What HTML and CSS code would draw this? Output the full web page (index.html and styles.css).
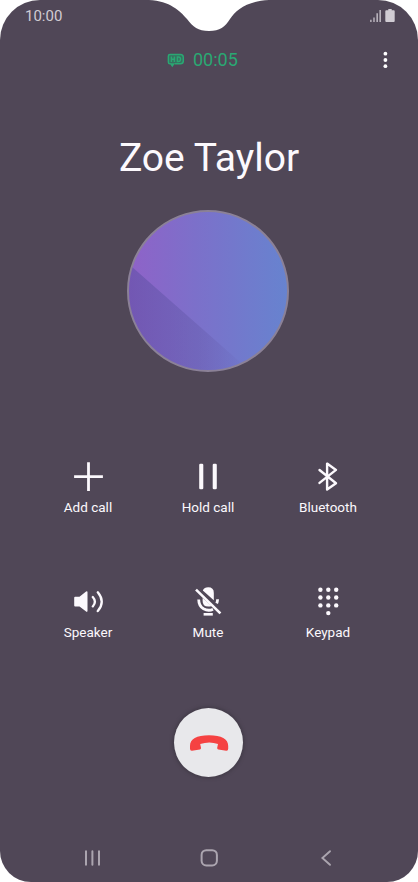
FILE: index.html
```html
<!DOCTYPE html>
<html lang="en">
<head>
<meta charset="UTF-8">
<meta name="viewport" content="width=device-width, initial-scale=1.0">
<title>Call</title>
<link rel="stylesheet" href="styles.css">
</head>
<body>

<div class="phone">
    <!-- Camera notch -->
    <svg class="notch" width="120" height="32" viewBox="0 0 120 32">
        <path d="M0 0C21 1 31 11 38 19C44 27 49 31 60 31C71 31 76 27 81 19C87 10 98 1 120 0Z" fill="#fff"/>
    </svg>

    <div class="status-bar">
        <span class="clock">10:00</span>
        <svg width="26" height="14" viewBox="0 0 26 14" fill="#d0ccd3">
            <path d="M.3 10.8h1.2v2.2H.3zM3.4 8.6h1.2V13H3.4zM6.5 4.2h1.3V13H6.5zM9.5 1.1h1.3V13H9.5z"/>
            <path d="M18.3 0h3.4v1.2h2q1 0 1 1v9.8q0 1-1 1h-7.4q-1 0-1-1V2.2q0-1 1-1h2z"/>
        </svg>
    </div>

    <div class="call-bar">
        <svg class="hd" width="18" height="16" viewBox="0 0 18 16" fill="none" stroke="#2aa873">
            <path d="M3.5 11.8H3Q1.4 11.8 1.4 10.2V4Q1.4 2.4 3 2.4H13.4Q16.3 2.4 16.3 5.2V9Q16.3 11.8 13.4 11.8H7.6" fill="#36705f" stroke-width="1.5"/>
            <path d="M4.4 4.4V10M7.4 4.4V10M4.4 7.2H7.4M10.4 4.9V9.5H11.4Q13.5 9.5 13.5 7.2T11.4 4.9Z" stroke-width="1.5"/>
            <path d="M2.6 11.2H8L5.3 15.2Z" fill="#2aa873" stroke="none"/>
        </svg>
        <span class="timer">00:05</span>
        <svg class="more" width="6" height="18" viewBox="0 0 6 18" fill="#fff">
            <circle cx="3.4" cy="2.7" r="1.9"/>
            <circle cx="3.4" cy="9" r="1.9"/>
            <circle cx="3.4" cy="15.2" r="1.9"/>
        </svg>
    </div>

    <h1 class="caller">Zoe Taylor</h1>
    <div class="avatar"></div>

    <div class="actions">
        <div class="action">
            <svg width="32" height="32" viewBox="0 0 32 32" stroke="#fcf9fd" stroke-width="2.8">
                <path d="M2.1 16.6H30.9M16.5 2.3V31"/>
            </svg>
            <span>Add call</span>
        </div>
        <div class="action">
            <svg width="32" height="32" viewBox="0 0 32 32" fill="#fcf9fd">
                <rect x="7.2" y="3.8" width="4.1" height="25.4" rx="1.3"/>
                <rect x="20.7" y="3.8" width="4.1" height="25.4" rx="1.3"/>
            </svg>
            <span>Hold call</span>
        </div>
        <div class="action">
            <svg width="32" height="32" viewBox="0 0 32 32" fill="none" stroke="#fcf9fd" stroke-width="2.4" stroke-linecap="round" stroke-linejoin="round">
                <path d="M7.5 10L24 23.2L15.1 29.5V3.6L24 9.9L7.5 22.9"/>
            </svg>
            <span>Bluetooth</span>
        </div>
        <div class="action">
            <svg width="32" height="32" viewBox="0 0 32 32" fill="none" stroke="#fcf9fd" stroke-width="2.3" stroke-linecap="round">
                <path d="M3.1 11.7H7.5L14.1 6.4Q15.5 5.6 15.5 7.3V25.8Q15.5 27.5 14.1 26.6L7.5 21.5H3.1Q2.2 21.5 2.2 20.5V12.7Q2.2 11.7 3.1 11.7Z" fill="#fcf9fd" stroke="none"/>
                <path d="M20.8 12Q25 16.7 20.8 21.4M25.8 7.3Q33.7 16.7 25.8 26.1"/>
            </svg>
            <span>Speaker</span>
        </div>
        <div class="action">
            <svg width="32" height="32" viewBox="0 0 32 32" fill="none" stroke="#fcf9fd" stroke-width="2.8">
                <path d="M10.8 5.4Q12.3 2.3 16.2 2.3Q21.8 2.3 21.8 7.8V15.3Z" fill="#fcf9fd" stroke="none"/>
                <path d="M10.6 13L19.6 21Q18.4 21.6 16.2 21.6Q10.6 21.6 10.6 16Z" fill="#fcf9fd" stroke="none"/>
                <path d="M6.7 14.4Q6.8 20.9 11.5 23.8Q16.5 26.5 21 24.2M25.6 14.3Q25.5 16.6 24.7 18.3"/>
                <path d="M11.6 29.3H20.8" stroke-width="2.6"/>
                <path d="M4 4.6L28.4 28.4" stroke-width="2.6"/>
            </svg>
            <span>Mute</span>
        </div>
        <div class="action">
            <svg width="32" height="32" viewBox="0 0 32 32" fill="#fcf9fd">
                <circle cx="8.4" cy="4.7" r="2.2"/><circle cx="16.3" cy="4.7" r="2.2"/><circle cx="24.2" cy="4.7" r="2.2"/>
                <circle cx="8.4" cy="12.5" r="2.2"/><circle cx="16.3" cy="12.5" r="2.2"/><circle cx="24.2" cy="12.5" r="2.2"/>
                <circle cx="8.4" cy="20.4" r="2.2"/><circle cx="16.3" cy="20.4" r="2.2"/><circle cx="24.2" cy="20.4" r="2.2"/>
                <circle cx="16.3" cy="28.1" r="2.2"/>
            </svg>
            <span>Keypad</span>
        </div>
    </div>

    <div class="end-call">
        <svg width="40" height="18" viewBox="0 0 40 18" fill="#f54242">
            <path d="M1 12C1 5 7.5 1.3 20 1.3S39.2 5 39.2 12V14.8Q39.2 17 37.2 16.8L29.4 15.5Q28 15.2 28.2 13.7L29 10Q20.5 6.8 11.2 10L12 13.7Q12.2 15.2 10.8 15.5L3 16.8Q1 17 1 14.8Z"/>
        </svg>
    </div>

    <div class="nav-bar">
        <svg width="18" height="18" viewBox="0 0 18 18" stroke="#aba5af" stroke-width="2" stroke-linecap="round">
            <path d="M3 2.2V15.7M9.4 2.2V15.7M16 2.2V15.7"/>
        </svg>
        <svg width="18" height="18" viewBox="0 0 18 18" fill="none" stroke="#aba5af" stroke-width="2">
            <rect x="1.6" y="1.2" width="15.3" height="15.3" rx="4.7"/>
        </svg>
        <svg width="18" height="18" viewBox="0 0 18 18" fill="none" stroke="#aba5af" stroke-width="1.9" stroke-linecap="round">
            <path d="M13 2.2L5.4 9L13 15.8"/>
        </svg>
    </div>
</div>

</body>
</html>
```
FILE: styles.css
```css
body {
    margin: 0;
    background-color: #fff;
    font-family: Roboto, sans-serif;
}
svg {
    display: block;
}
.phone {
    position: relative;
    display: flex;
    flex-direction: column;
    align-items: center;
    box-sizing: border-box;
    width: 418px;
    height: 882px;
    background-color: #504757;
    border-radius: 40px 40px 31px 31px;
    overflow: hidden;
}
.notch {
    position: absolute;
    top: 0;
    left: 149px;
}
.status-bar {
    display: flex;
    justify-content: space-between;
    align-items: center;
    box-sizing: border-box;
    width: 100%;
    height: 32px;
    padding: 0 23px 0 25px;
}
.status-bar svg {
    margin-right: -1px;
}
.clock {
    font-size: 15px;
    color: #d0ccd3;
}
.call-bar {
    display: grid;
    grid-template-columns: 18px 1fr 6px;
    column-gap: 8px;
    align-items: center;
    box-sizing: border-box;
    width: 100%;
    height: 56px;
    padding: 0 30px 0 167px;
}
.timer {
    padding-bottom: 2px;
    font-size: 18px;
    color: #2aa873;
}
.caller {
    margin: 46px 0 0;
    font-size: 39px;
    font-weight: 400;
    line-height: 48px;
    color: #fcf9fd;
}
.avatar {
    position: relative;
    box-sizing: border-box;
    width: 162px;
    height: 162px;
    margin: 28px 2px 0 0;
    border: 2px solid #8b8197;
    border-radius: 50%;
    background: linear-gradient(90deg, #8f62c8, #7c70ca 42%, #6783cf);
    overflow: hidden;
}
.avatar::after {
    content: "";
    position: absolute;
    inset: 0;
    background: linear-gradient(90deg, rgba(83, 75, 156, 0.48), rgba(93, 83, 160, 0.32) 45%, rgba(93, 83, 160, 0) 75%);
    clip-path: polygon(0 33%, 76% 100%, 0 100%);
}
.actions {
    display: grid;
    grid-template-columns: repeat(3, 120px);
    row-gap: 69px;
    margin: 88px 2px 0 0;
}
.action {
    display: flex;
    flex-direction: column;
    align-items: center;
    gap: 6px;
    font-size: 13.5px;
    line-height: 18px;
    color: #fcf9fd;
}
.end-call {
    display: flex;
    justify-content: center;
    align-items: center;
    width: 69px;
    height: 69px;
    margin: 67px 1px 0 0;
    border-radius: 50%;
    background-color: #e8e8eb;
    box-shadow: 0 0 3px 2px #453e4b;
}
.nav-bar {
    display: flex;
    justify-content: space-between;
    width: 252px;
    margin-top: 72px;
}
```
